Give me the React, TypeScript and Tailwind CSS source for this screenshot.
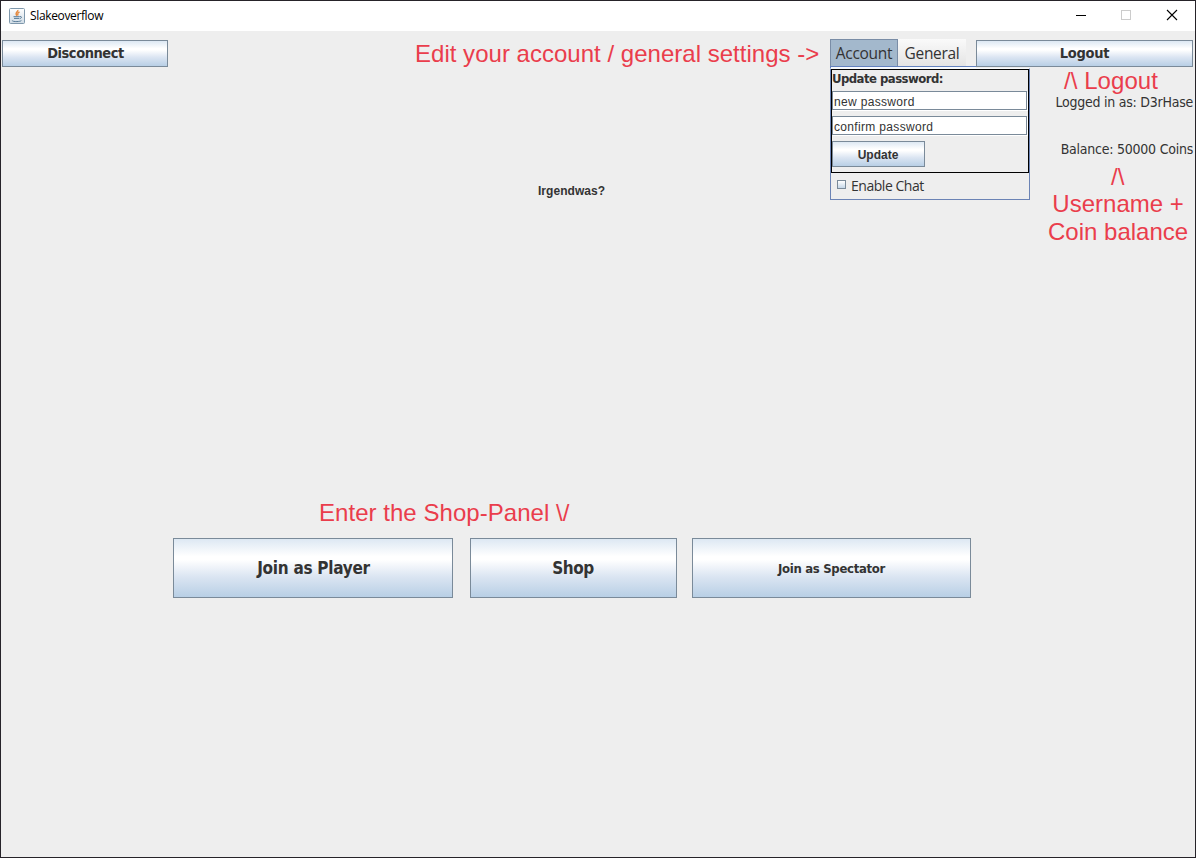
import type { ReactNode } from "react";

const ui = "font-['DejaVu_Sans_Condensed','DejaVu_Sans',sans-serif] [font-stretch:condensed]";

function JButton({ className, children }: { className: string; children: ReactNode }) {
  return (
    <button
      className={`flex shrink-0 items-center justify-center whitespace-nowrap border border-[#7a8a99] bg-[linear-gradient(to_bottom,#dde8f3_0%,#ffffff_30%,#ffffff_36%,#dbe5f2_65%,#b8cfe5_100%)] font-bold text-[#333333] ${className}`}
    >
      {children}
    </button>
  );
}

function Note({ className, children }: { className: string; children: ReactNode }) {
  return (
    <div
      className={`absolute whitespace-nowrap font-['Liberation_Sans',sans-serif] text-[24px] leading-[28px] text-[#ea3d4c] ${className}`}
    >
      {children}
    </div>
  );
}

function Field({ value }: { value: string }) {
  return (
    <div className="mr-px h-[19px] border border-[#7a8a99] bg-white pl-px font-['Liberation_Sans',sans-serif] text-[12px] leading-[20px] tracking-[0.33px] text-[#333333] shadow-[1px_1px_0_#ffffff]">
      {value}
    </div>
  );
}

function JavaIcon() {
  return (
    <svg width="16" height="16" viewBox="0 0 16 16" fill="none">
      <defs>
        <linearGradient id="tile" x1="0" y1="0" x2="0" y2="1">
          <stop offset="0" stopColor="#ffffff" />
          <stop offset="1" stopColor="#cfdbe5" />
        </linearGradient>
      </defs>
      <rect x="0.5" y="0.5" width="15" height="15" rx="1" fill="url(#tile)" stroke="#7f98ac" />
      <path d="M8.8 2C9.5 3.7 5.2 4.6 7.9 7.7M10.5 4C8.1 5 8.5 5.9 9.1 7.5" stroke="#e58a40" strokeWidth="1.4" />
      <path d="M4.5 8.7h6.3M5 10.4h5.2M11 8.6c2.2-.5 1.8 1.7-.3 2.1M3.3 12.4c-.8 1.5 8 1.6 9.1.1" stroke="#587b98" strokeWidth="1" />
    </svg>
  );
}

export default function App() {
  return (
    <div className="relative flex h-[858px] w-[1196px] flex-col overflow-hidden border border-[#262329] bg-[#eeeeee]">
      <header className="flex h-[30px] shrink-0 items-center bg-white pl-2">
        <JavaIcon />
        <span className="ml-[5px] font-['Open_Sans',sans-serif] text-[12px] tracking-[-0.36px] text-black">Slakeoverflow</span>
        <div className="ml-auto flex items-center">
          <svg width="46" height="30" viewBox="0 0 46 30" fill="none" stroke="#000" shapeRendering="crispEdges">
            <path d="M19 14.5h10" />
          </svg>
          <svg width="46" height="30" viewBox="0 0 46 30" fill="none" stroke="#cccccc" shapeRendering="crispEdges">
            <rect x="18.5" y="9.5" width="9" height="9" />
          </svg>
          <svg width="46" height="30" viewBox="0 0 46 30" fill="none" stroke="#000" strokeWidth="1.1">
            <path d="M18 9l10 10M28 9l-10 10" />
          </svg>
        </div>
      </header>

      <div className="flex h-[37px] shrink-0 items-end pr-[2px] pl-px">
        <JButton className={`mb-px h-[27px] w-[166px] pt-px pl-px text-[14.5px] tracking-[-0.45px] ${ui}`}>Disconnect</JButton>
        <div className="ml-auto w-[146px] font-['Open_Sans',sans-serif] text-[15.5px] tracking-[-0.3px] text-[#333333]">
          <div className="flex h-[27px] leading-[27px]">
            <div className="w-[68px] border border-b-0 border-[#7a8da6] bg-[#a3b8cc] text-center">Account</div>
            <div className="w-[68px] bg-gradient-to-b from-[#fafafa] to-[#e4e4e4] text-center leading-[29px]">General</div>
          </div>
          <div className="h-[2px] border-t border-l border-[#6382bf] bg-[#f7fafd]" />
        </div>
        <JButton className={`mb-px h-[27px] w-[217px] pt-px text-[14.5px] tracking-[-0.25px] ${ui}`}>Logout</JButton>
      </div>

      <div className="flex h-[470px] shrink-0 items-start pr-[2px]">
        <div className="w-[829px] pt-[115px] pl-[537px] font-['Liberation_Sans',sans-serif] text-[12px] leading-[16px] font-bold tracking-[0.04px] text-[#333333]">
          Irgendwas?
        </div>
        <div className="h-[132px] w-[200px] shrink-0 border border-[#6b83b5] border-t-[#f7fafd]">
          <div className="h-[104px] border border-black">
            <div className={`h-[21px] text-[13px] leading-[17px] font-bold tracking-[-0.54px] text-[#333333] ${ui}`}>Update password:</div>
            <Field value="new password" />
            <div className="h-[6px]" />
            <Field value="confirm password" />
            <div className="h-[6px]" />
            <JButton className="h-[26px] w-[93px] pt-px pr-px font-['Liberation_Sans',sans-serif] text-[12px]">Update</JButton>
          </div>
          <label className="flex h-[26px] items-center pl-[6px] font-['Open_Sans',sans-serif] text-[14px] tracking-[-0.47px] text-[#333333]">
            <span className="mr-[5px] mb-[3px] h-[9px] w-[9px] border border-[#7a8a99] bg-gradient-to-b from-white to-[#c5d7e8]" />
            <span className="mb-px">Enable Chat</span>
          </label>
        </div>
        <div className={`ml-auto flex flex-col pt-[25px] text-right text-[14px] leading-[18px] tracking-[-0.24px] text-[#333333] ${ui}`}>
          <span>Logged in as: D3rHase</span>
          <span className="mt-[29px]">Balance: 50000 Coins</span>
        </div>
      </div>

      <div className="flex shrink-0 pl-[172px]">
        <JButton className={`h-[60px] w-[280px] pt-px pl-px text-[17px] tracking-[-0.27px] ${ui}`}>Join as Player</JButton>
        <JButton className={`ml-[17px] h-[60px] w-[207px] pt-px pr-px text-[17px] tracking-[-0.5px] ${ui}`}>Shop</JButton>
        <JButton className={`ml-[15px] h-[60px] w-[279px] pt-px text-[13px] tracking-[-0.3px] ${ui}`}>Join as Spectator</JButton>
      </div>

      <Note className="top-[39px] left-[414px] tracking-[0.02px]">Edit your account / general settings -&gt;</Note>
      <Note className="top-[66px] left-[1063px] tracking-[0.06px]">/\ Logout</Note>
      <Note className="top-[162px] left-[1110px]">/\</Note>
      <Note className="top-[189px] left-[1047px] text-center">
        Username +<br />
        Coin balance
      </Note>
      <Note className="top-[498px] left-[318px] tracking-[0.04px]">Enter the Shop-Panel \/</Note>
    </div>
  );
}
